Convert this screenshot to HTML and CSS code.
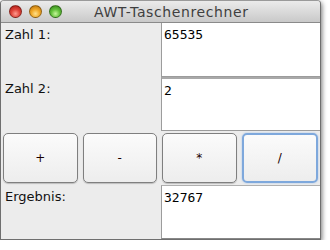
FILE: index.html
```html
<!DOCTYPE html>
<html lang="de">
<head>
    <meta charset="UTF-8">
    <title>AWT-Taschenrechner</title>
    <link rel="stylesheet" href="styles.css">
</head>
<body>
<div class="window">
    <div class="titlebar">
        <div class="lights">
            <span class="light red"></span>
            <span class="light yellow"></span>
            <span class="light green"></span>
        </div>
        <div class="title">AWT-Taschenrechner</div>
    </div>

    <div class="content">
        <div class="row">
            <div class="label">Zahl 1:</div>
            <div class="field">65535</div>
        </div>
        <div class="row">
            <div class="label">Zahl 2:</div>
            <div class="field">2</div>
        </div>
        <div class="buttons">
            <button class="btn">+</button>
            <button class="btn">-</button>
            <button class="btn">*</button>
            <button class="btn focus">/</button>
        </div>
        <div class="row">
            <div class="label">Ergebnis:</div>
            <div class="field result">32767</div>
        </div>
    </div>
</div>
</body>
</html>
```

FILE: styles.css
```css
* {
    margin: 0;
    padding: 0;
    box-sizing: border-box;
}
body {
    background: #fff;
    font-family: "DejaVu Sans", sans-serif;
    font-size: 12px;
    color: #000;
}
.window {
    width: 321px;
    height: 240px;
    border: 1px solid #6f6f6f;
    border-top-color: #9a9a9a;
    border-radius: 4px 4px 0 0;
    background: #ececec;
    box-shadow: 1px 2px 5px rgba(0, 0, 0, 0.55);
    overflow: hidden;
    display: flex;
    flex-direction: column;
}

/* title bar */
.titlebar {
    height: 22px;
    flex: none;
    display: flex;
    align-items: center;
    background: linear-gradient(#ebebeb, #c9c9c9);
    border-bottom: 1px solid #8a8a8a;
}
.lights {
    display: flex;
    gap: 7px;
    padding-left: 8px;
}
.light {
    width: 13px;
    height: 13px;
    border-radius: 50%;
    border: 1px solid rgba(0, 0, 0, 0.35);
}
.red {
    background: radial-gradient(circle at 50% 70%, #ff9b8f 0, #e0443a 45%, #a3170f 100%);
}
.yellow {
    background: radial-gradient(circle at 50% 70%, #ffe18a 0, #f0a828 45%, #b36b07 100%);
}
.green {
    background: radial-gradient(circle at 50% 70%, #c6f59a 0, #63c13c 45%, #2e7d14 100%);
}
.title {
    margin-left: 32px;
    font-size: 14px;
    color: #3f3f3f;
    letter-spacing: 0.6px;
}

/* content */
.content {
    flex: 1;
    display: flex;
    flex-direction: column;
}
.row {
    height: 54px;
    display: flex;
}
.label {
    width: 160px;
    padding: 4px 0 0 4px;
    font-size: 13px;
    color: #111;
}
.field {
    flex: 1;
    background: #fff;
    border: 1px solid #9c9c9c;
    border-right: none;
    border-top-color: #b0b0b0;
    padding: 4px 0 0 2px;
    font-family: "DejaVu Sans Mono", monospace;
    font-size: 13px;
}
.row:first-child .field {
    border-top: none;
}
.row + .row .field {
    border-top: 2px solid #a9a9a9;
}
.field.result {
    border-top: 1px solid #b0b0b0;
    border-bottom: 1px solid #888;
}

.buttons {
    height: 54px;
    display: flex;
    gap: 5px;
    padding: 2px 2px 0 2px;
}
.btn {
    flex: 1;
    height: 50px;
    border: 1px solid #7f7f7f;
    border-radius: 5px;
    background: linear-gradient(#fbfbfb, #ededed);
    box-shadow: 0 1px 1px rgba(0, 0, 0, 0.2);
    font-family: "DejaVu Sans", sans-serif;
    font-size: 12px;
    color: #1a0000;
}
.btn.focus {
    border: 2px solid #7ea8dc;
    box-shadow: 0 0 2px #9dbde6;
}
```
